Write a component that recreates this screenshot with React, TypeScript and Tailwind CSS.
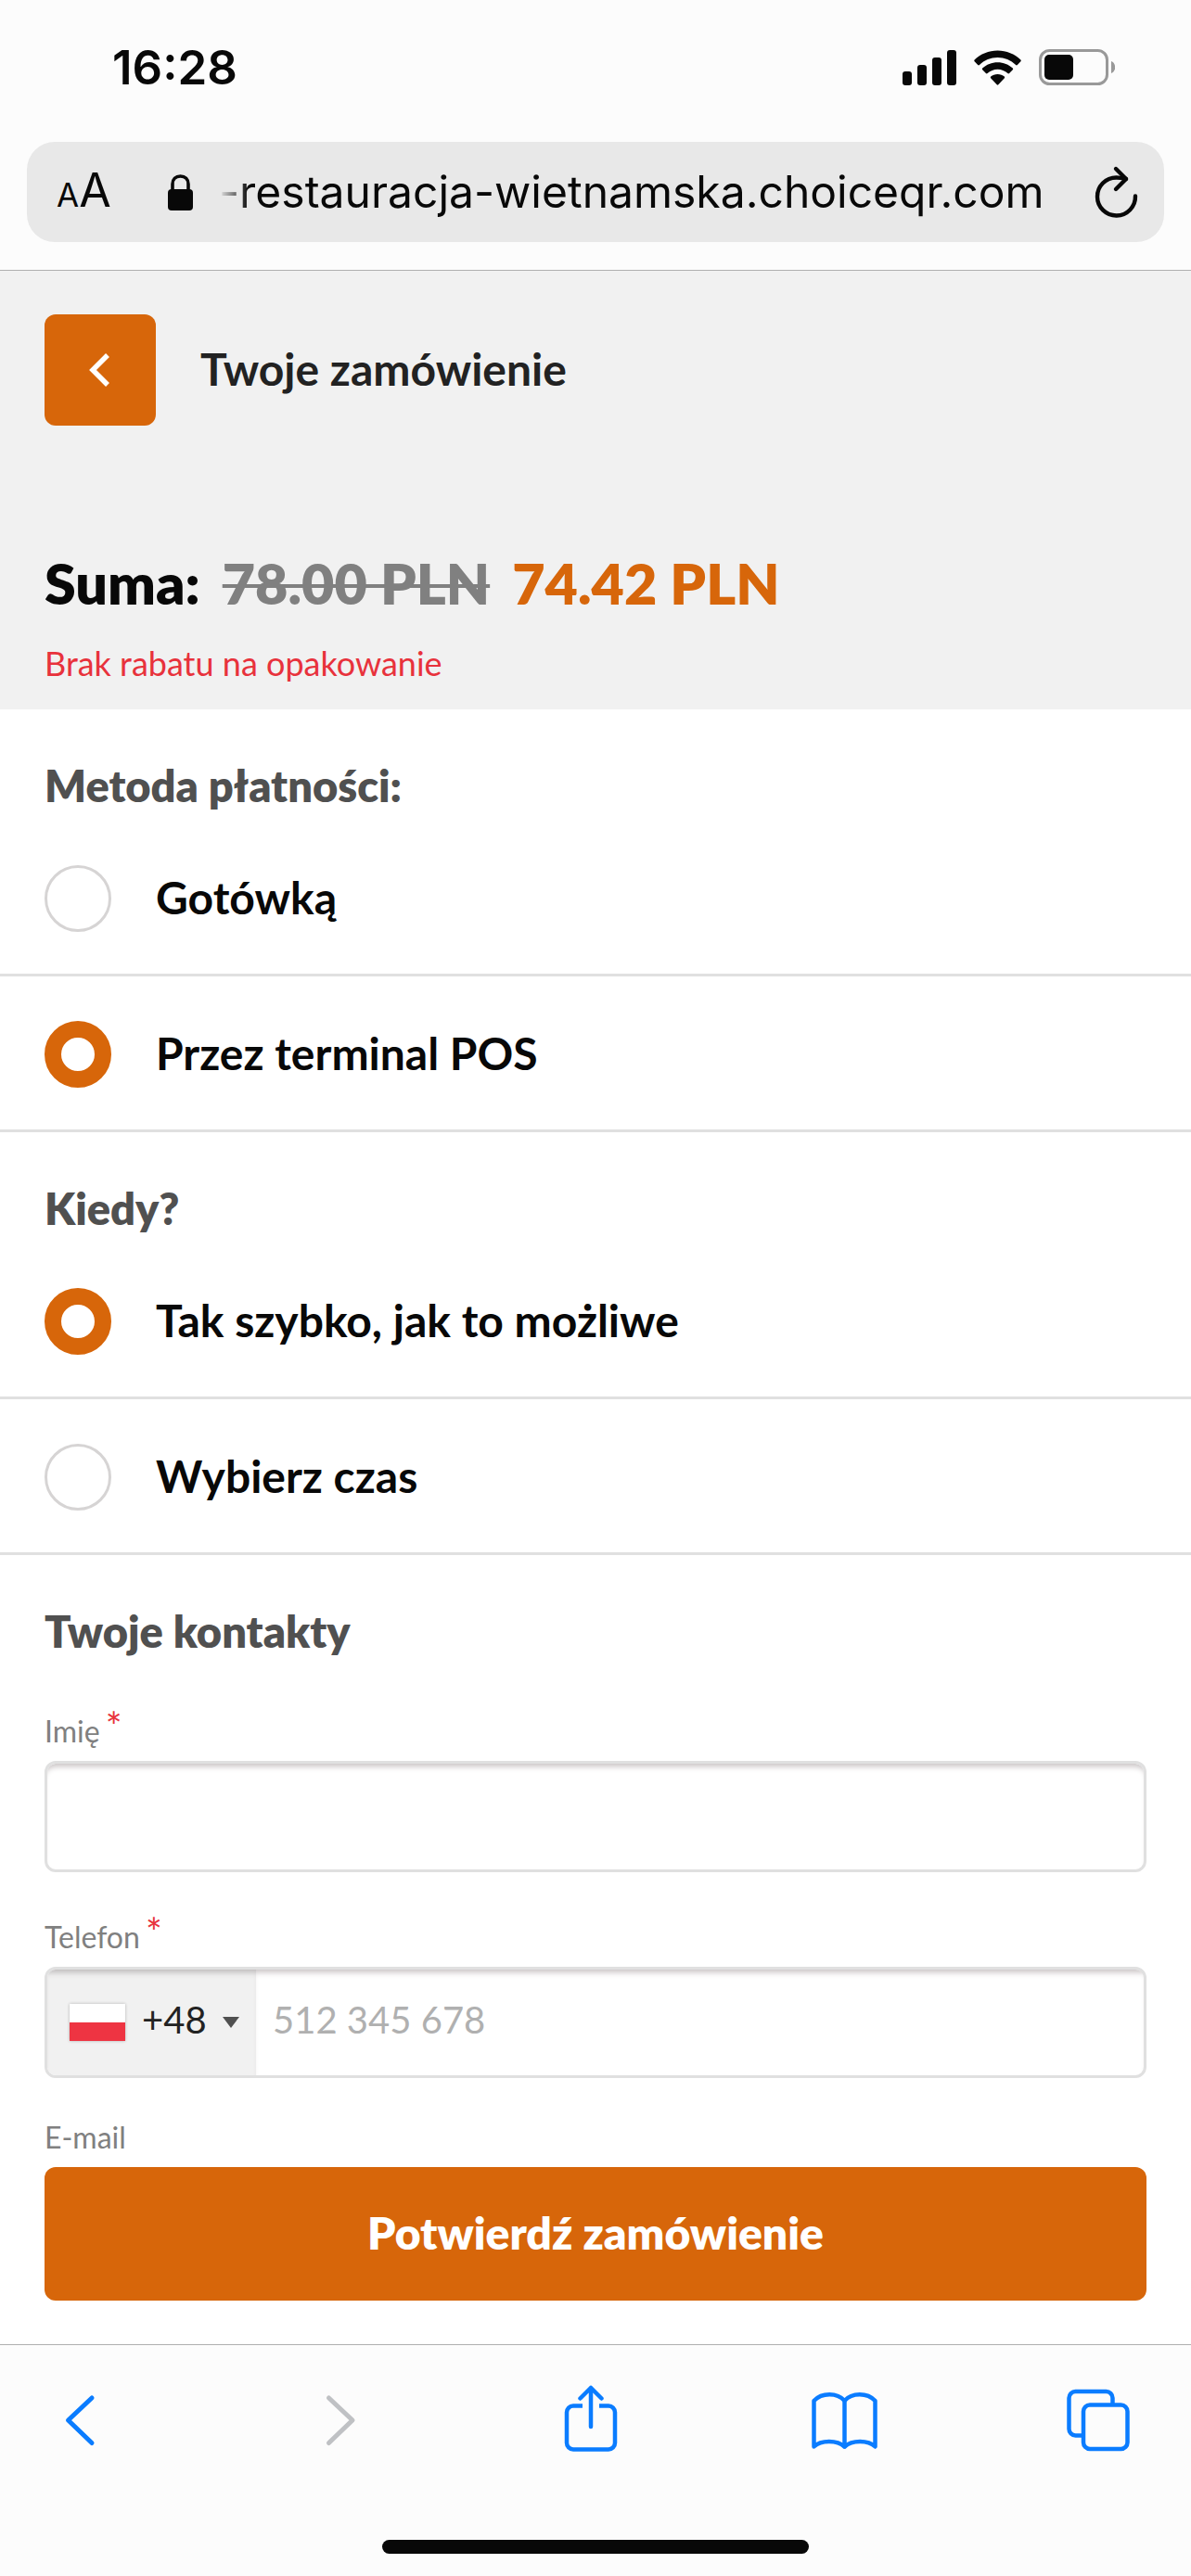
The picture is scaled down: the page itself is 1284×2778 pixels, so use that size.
import React from 'react';

interface RadioOption {
  id: string;
  label: string;
}

interface RadioSectionProps {
  title: string;
  name: string;
  options: RadioOption[];
  selected: string;
}

interface FieldLabelProps {
  htmlFor: string;
  text: string;
  required?: boolean;
}

const paymentMethods: RadioOption[] = [
  { id: 'cash', label: 'Gotówką' },
  { id: 'terminal', label: 'Przez terminal POS' },
];

const deliveryTimes: RadioOption[] = [
  { id: 'asap', label: 'Tak szybko, jak to możliwe' },
  { id: 'scheduled', label: 'Wybierz czas' },
];

const StatusBar: React.FC = () => (
  <div className="flex h-[145px] items-center justify-between pr-[82px] pl-[121px]">
    <time className="text-[51px] leading-[60px] font-semibold">16:28</time>
    <div className="flex items-center gap-[19px]">
      {/* Signal */}
      <svg width="58" height="38" viewBox="0 0 58 38" fill="currentColor" aria-hidden="true">
        <rect x="0" y="23" width="10" height="15" rx="3" />
        <rect x="16" y="16" width="10" height="22" rx="3" />
        <rect x="32" y="8" width="10" height="30" rx="3" />
        <rect x="48" y="0" width="10" height="38" rx="3" />
      </svg>
      {/* Wi-Fi */}
      <svg width="51" height="38" viewBox="0 0 51 38" fill="currentColor" aria-hidden="true">
        <path d="M25.5 0.5C35 0.5 44 4.2 50.4 10.6c.5.5.5 1.2 0 1.7l-3.6 3.7c-.5.5-1.2.5-1.7 0C39.8 10.9 32.9 8 25.5 8S11.2 10.9 5.9 16c-.5.5-1.2.5-1.7 0L.6 12.3c-.5-.5-.5-1.2 0-1.7C7 4.2 16 .5 25.5.5Z" />
        <path d="M25.5 13.2c6.2 0 12 2.4 16.3 6.4.5.5.5 1.2 0 1.7l-3.7 3.7c-.5.5-1.2.5-1.7 0-3-2.7-6.8-4.3-10.9-4.3s-7.9 1.6-10.9 4.3c-.5.5-1.2.5-1.7 0l-3.7-3.7c-.5-.5-.5-1.2 0-1.7 4.3-4 10.1-6.4 16.3-6.4Z" />
        <path d="M25.5 26c2.8 0 5.4 1 7.3 2.6.5.5.5 1.2.1 1.7l-6.6 7c-.4.5-1.2.5-1.6 0l-6.6-7c-.4-.5-.4-1.2.1-1.7C20.1 27 22.7 26 25.5 26Z" />
      </svg>
      {/* Battery */}
      <svg width="82" height="39" viewBox="0 0 82 39" aria-hidden="true">
        <rect x="1.5" y="1.5" width="72" height="36" rx="10" fill="none" stroke="#999999" strokeWidth="3" />
        <rect x="6" y="6" width="31" height="27" rx="5" fill="currentColor" />
        <path d="M78 13c2.6 1 4.2 3.5 4.2 6.5S80.6 25 78 26Z" fill="#999999" />
      </svg>
    </div>
  </div>
);

const AddressBar: React.FC = () => (
  <div className="mx-[29px] mt-2 mb-[30px] flex h-[108px] items-center rounded-[30px] bg-[#e8e8e8] pr-[26px] pl-8">
    <button type="button" aria-label="Opcje strony" className="flex w-[120px] items-baseline leading-[60px]">
      <span className="text-[35px]">A</span>
      <span className="text-[50px]">A</span>
    </button>
    <svg width="27" height="39" viewBox="0 0 27 39" fill="none" aria-hidden="true">
      <rect x="0" y="16" width="27" height="23" rx="4" fill="currentColor" />
      <path d="M5 18v-7.5C5 5.5 8.5 2 13.5 2S22 5.5 22 10.5V18" stroke="currentColor" strokeWidth="3.6" />
    </svg>
    <span className="ml-7 flex-1 overflow-hidden text-[48px] leading-[60px] whitespace-nowrap [mask-image:linear-gradient(to_right,transparent,black_32px)]">
      -restauracja-wietnamska.choiceqr.com
    </span>
    <button type="button" aria-label="Odśwież">
      <svg width="50" height="60" viewBox="0 0 50 60" fill="none" stroke="currentColor" strokeWidth="4.4" strokeLinecap="round" strokeLinejoin="round">
        <path d="M45 34.5A20.5 20.5 0 1 1 24.5 14.5C28 14.5 31 15 35 16" />
        <path d="M24 5l11 11-11 11" />
      </svg>
    </button>
  </div>
);

const RadioSection: React.FC<RadioSectionProps> = ({ title, name, options, selected }) => (
  <fieldset>
    <legend className="px-12 pt-[52px] pb-2 text-[47px] leading-[60px] font-extrabold text-[#505050]">{title}</legend>
    {options.map(option => (
      <label
        key={option.id}
        htmlFor={option.id}
        className="flex items-center gap-12 border-b-[3px] border-[#e0e0e0] px-12 pt-12 pb-[45px]"
      >
        <input
          type="radio"
          id={option.id}
          name={name}
          defaultChecked={option.id === selected}
          className="size-[72px] shrink-0 appearance-none rounded-full border-[3px] border-[#d6d4d4] bg-white checked:border-[18px] checked:border-[#d7660a]"
        />
        <span className="pb-[2px] text-[48px] leading-[60px] font-bold">{option.label}</span>
      </label>
    ))}
  </fieldset>
);

const FieldLabel: React.FC<FieldLabelProps> = ({ htmlFor, text, required }) => (
  <label htmlFor={htmlFor} className="flex h-10 gap-[6px] text-[32px] leading-[42px] text-[#808080]">
    {text}
    {required && <span className="text-[42px] leading-[30px] text-[#e8323c]">*</span>}
  </label>
);

const BottomToolbar: React.FC = () => (
  <nav className="border-t border-[#b0b0b0] bg-[#fcfcfc] pt-[43px] pb-6">
    <div className="flex justify-between pr-[66px] pl-[51px] text-[#0a7cff]">
      <button type="button" aria-label="Wstecz">
        <svg width="70" height="72" viewBox="0 0 70 72" fill="none" stroke="currentColor" strokeWidth="5" strokeLinecap="round" strokeLinejoin="round">
          <path d="M48 14L22.5 38 48 62.5" />
        </svg>
      </button>
      <button type="button" aria-label="Dalej" disabled className="text-[#bfc1c4]">
        <svg width="70" height="72" viewBox="0 0 70 72" fill="none" stroke="currentColor" strokeWidth="5" strokeLinecap="round" strokeLinejoin="round">
          <path d="M29.5 14L55 38 29.5 62.5" />
        </svg>
      </button>
      <button type="button" aria-label="Udostępnij">
        <svg width="70" height="72" viewBox="0 0 70 72" fill="none" stroke="currentColor" strokeWidth="4.5" strokeLinejoin="round">
          <path d="M28 22.5h-10a7 7 0 0 0-7 7v33a7 7 0 0 0 7 7h38a7 7 0 0 0 7-7v-33a7 7 0 0 0-7-7h-10" />
          <path d="M37 45V3M25.5 14.5L37 3l11.5 11.5" strokeLinecap="round" />
        </svg>
      </button>
      <button type="button" aria-label="Zakładki">
        <svg width="70" height="72" viewBox="0 0 70 72" fill="none" stroke="currentColor" strokeWidth="4.5" strokeLinecap="round" strokeLinejoin="round" className="overflow-visible">
          <path d="M36.5 17C28.5 8 12 8 3.5 17v49.5C11 59 28.5 59 36.5 66.5 44.5 59 62 59 69.5 66.5V17C61 8 44.5 8 36.5 17Z" />
          <path d="M36.5 17v49.5" />
        </svg>
      </button>
      <button type="button" aria-label="Karty">
        <svg width="70" height="72" viewBox="0 0 70 72" fill="none" stroke="currentColor" strokeWidth="4.5">
          <rect x="20" y="21.5" width="47.5" height="47.5" rx="7" />
          <path d="M20 54.5h-8.5a7 7 0 0 1-7-7V14a7 7 0 0 1 7-7h33a7 7 0 0 1 7 7v7.5" />
        </svg>
      </button>
    </div>
    {/* Home indicator */}
    <div className="mx-auto mt-[95px] h-[15px] w-[460px] rounded-full bg-[#080808]" />
  </nav>
);

const App: React.FC = () => {
  return (
    <div className="flex min-h-screen flex-col bg-white font-['Lato',sans-serif] text-[#080808]">
      <header className="border-b border-[#b0b0b0] bg-[#fcfcfc] font-['Inter',sans-serif]">
        <StatusBar />
        <AddressBar />
      </header>

      {/* Order summary */}
      <section className="bg-[#f1f1f1] px-12 pt-[47px] pb-[26px]">
        <div className="flex items-center gap-12">
          <button
            type="button"
            aria-label="Powrót"
            className="flex size-[120px] items-center justify-center rounded-xl bg-[#d7660a] text-white"
          >
            <svg width="24" height="36" viewBox="0 0 24 36" fill="none" stroke="currentColor" strokeWidth="5.5">
              <path d="M20 2L4 18l16 16" />
            </svg>
          </button>
          <h1 className="pb-[2px] text-[48px] leading-[60px] font-bold text-[#222222]">Twoje zamówienie</h1>
        </div>
        <p className="mt-[134px] flex gap-6 text-[61px] leading-[72px] font-extrabold">
          Suma:
          <s className="text-[#808080] decoration-4">78.00 PLN</s>
          <span className="text-[#d7660a]">74.42 PLN</span>
        </p>
        <p className="mt-[26px] text-[36px] leading-[48px] text-[#e8323c]">Brak rabatu na opakowanie</p>
      </section>

      <form className="flex-1">
        <RadioSection title="Metoda płatności:" name="payment" options={paymentMethods} selected="terminal" />
        <RadioSection title="Kiedy?" name="time" options={deliveryTimes} selected="asap" />

        {/* Contact details */}
        <section className="px-12 pt-[52px] pb-[47px]">
          <h2 className="mb-[57px] text-[47px] leading-[60px] font-extrabold text-[#505050]">Twoje kontakty</h2>

          <FieldLabel htmlFor="name" text="Imię" required />
          <input
            id="name"
            type="text"
            className="mt-[13px] block h-[120px] w-full rounded-xl border-[3px] border-[#e0e0e0] px-5 text-[40px] shadow-[inset_0_7px_6px_-4px_#c8c2c3]"
          />

          <div className="mt-[49px]">
            <FieldLabel htmlFor="phone" text="Telefon" required />
            <div className="mt-[13px] flex h-[120px] overflow-hidden rounded-xl border-[3px] border-[#e0e0e0]">
              <button
                type="button"
                aria-label="Kod kraju"
                className="flex w-[225px] shrink-0 items-center bg-[#f1f1f1] pr-[18px] pl-6 text-[40px] leading-[48px] text-[#222222] shadow-[inset_0_7px_6px_-4px_#bcb8b9]"
              >
                <span className="flex h-10 w-[60px] flex-col bg-white shadow-[0_0_3px_#b0b0b0]">
                  <span className="mt-auto h-5 bg-[#ee3442]" />
                </span>
                <span className="ml-[18px] pb-[6px]">+48</span>
                <svg width="18" height="12" viewBox="0 0 18 12" fill="#505050" className="ml-auto" aria-hidden="true">
                  <path d="M0 0h18L9 12Z" />
                </svg>
              </button>
              <input
                id="phone"
                type="tel"
                placeholder="512 345 678"
                className="min-w-0 flex-1 px-[18px] pb-[6px] text-[40px] placeholder:text-[#b0b0b0] shadow-[inset_0_7px_6px_-4px_#c8c2c3]"
              />
            </div>
          </div>

          <div className="mt-[43px] text-[32px] leading-[42px] text-[#808080]">E-mail</div>
          <button
            type="submit"
            className="mt-[11px] h-36 w-full rounded-xl bg-[#d7660a] pb-[2px] text-[48px] leading-[60px] font-extrabold text-white"
          >
            Potwierdź zamówienie
          </button>
        </section>
      </form>

      <BottomToolbar />
    </div>
  );
};

export default App;
